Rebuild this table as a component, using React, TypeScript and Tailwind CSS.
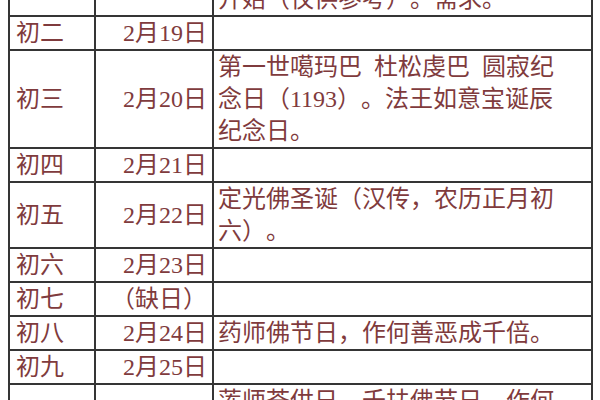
import React from "react";

type Row = {
  day: string;
  date: string;
  lines: string[];
};

// 藏历节日表（截图从表格中段开始，首行被裁掉一部分）
const ROWS: Row[] = [
  { day: "", date: "", lines: ["开始（仅供参考）。需求。"] },
  { day: "初二", date: "2月19日", lines: [] },
  {
    day: "初三",
    date: "2月20日",
    lines: [
      "第一世噶玛巴\u2002杜松虔巴\u2002圆寂纪",
      "念日（1193）。法王如意宝诞辰",
      "纪念日。",
    ],
  },
  { day: "初四", date: "2月21日", lines: [] },
  {
    day: "初五",
    date: "2月22日",
    lines: ["定光佛圣诞（汉传，农历正月初", "六）。"],
  },
  { day: "初六", date: "2月23日", lines: [] },
  { day: "初七", date: "（缺日）", lines: [] },
  { day: "初八", date: "2月24日", lines: ["药师佛节日，作何善恶成千倍。"] },
  { day: "初九", date: "2月25日", lines: [] },
  {
    day: "初十",
    date: "2月26日",
    lines: ["莲师荟供日，千扶佛节日，作何", "善恶成千倍。"],
  },
];

const cell = "border-2 border-[#353535] p-0 align-middle";

export default function App() {
  return (
    <div
      className="h-[400px] w-[600px] overflow-hidden bg-white text-[24px] leading-[32px] text-[#7f3b3d] [text-spacing-trim:space-all] [font-feature-settings:'palt'_0]"
      style={{ fontFamily: '"Liberation Serif", "Noto Sans CJK SC", serif' }}
    >
      <table className="-mt-[19px] ml-[8px] w-[585px] table-fixed border-collapse">
        <colgroup>
          <col className="w-[86px]" />
          <col className="w-[118px]" />
          <col />
        </colgroup>
        <tbody>
          {ROWS.map((row, i) => (
            <tr key={i}>
              <td className={`${cell} pl-[6px] text-left`}>{row.day}</td>
              <td className={`${cell} pr-[5px] text-right`}>{row.date}</td>
              <td className={`${cell} pl-[4px] text-left`}>
                {row.lines.length === 0
                  ? "\u00a0"
                  : row.lines.map((line, j) => (
                      <div key={j} className="whitespace-nowrap">
                        {line}
                      </div>
                    ))}
              </td>
            </tr>
          ))}
        </tbody>
      </table>
    </div>
  );
}
